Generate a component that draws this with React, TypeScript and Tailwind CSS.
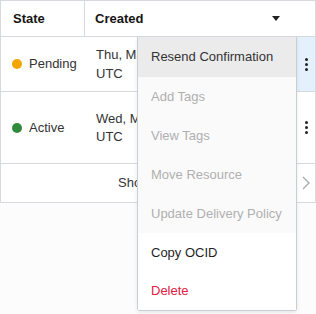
import React from "react";

const font = { fontFamily: '"Liberation Sans", Arial, sans-serif' };

function Kebab() {
  return (
    <div className="flex flex-col items-center gap-[2px]">
      <span className="block w-[3px] h-[3px] rounded-full bg-[#222]"></span>
      <span className="block w-[3px] h-[3px] rounded-full bg-[#222]"></span>
      <span className="block w-[3px] h-[3px] rounded-full bg-[#222]"></span>
    </div>
  );
}

const menuItems = [
  { label: "Resend Confirmation", kind: "active" },
  { label: "Add Tags", kind: "disabled" },
  { label: "View Tags", kind: "disabled" },
  { label: "Move Resource", kind: "disabled" },
  { label: "Update Delivery Policy", kind: "disabled" },
  { label: "Copy OCID", kind: "normal" },
  { label: "Delete", kind: "danger" },
];

export default function App() {
  return (
    <div
      className="relative w-[316px] h-[314px] overflow-hidden bg-[#fcfcfc] text-[13px] text-[#333]"
      style={font}
    >
      {/* Table */}
      <div className="w-[316px] bg-white border-t border-l border-r border-b border-[#d6dadf]">
        {/* Header */}
        <div className="flex h-[36px] border-b border-[#d6dadf] font-bold text-[#161513]">
          <div className="w-[84px] flex items-center pl-[12px] border-r border-[#d6dadf]">State</div>
          <div className="flex-1 flex items-center pl-[10px] pr-[35px] justify-between">
            <span>Created</span>
            <span className="block w-0 h-0 border-l-[4px] border-r-[4px] border-t-[5px] border-l-transparent border-r-transparent border-t-[#222]"></span>
          </div>
        </div>

        {/* Row 1 */}
        <div className="flex h-[55px] border-b border-[#d6dadf]">
          <div className="w-[85px] flex items-center pl-[11px] gap-[7px]">
            <span className="block w-[10px] h-[10px] rounded-full bg-[#f2a500]"></span>
            <span>Pending</span>
          </div>
          <div className="flex-1 flex items-center pl-[10px] leading-[19px] whitespace-nowrap overflow-hidden">
            <div>
              Thu, Mar 21, 2024, 09:15:32
              <br />
              UTC
            </div>
          </div>
          <div className="w-[19px] flex items-center justify-center border-l border-[#d6dadf] bg-[#e4f0fb]">
            <Kebab />
          </div>
        </div>

        {/* Row 2 */}
        <div className="flex h-[72px] border-b border-[#d6dadf]">
          <div className="w-[85px] flex items-center pl-[11px] gap-[7px]">
            <span className="block w-[10px] h-[10px] rounded-full bg-[#2f8a3b]"></span>
            <span>Active</span>
          </div>
          <div className="flex-1 flex items-center pl-[10px] leading-[18px] whitespace-nowrap overflow-hidden">
            <div>
              Wed, Mar 13, 2024, 14:02:10
              <br />
              UTC
            </div>
          </div>
          <div className="w-[19px] flex items-center justify-center border-l border-[#d6dadf]">
            <Kebab />
          </div>
        </div>

        {/* Footer */}
        <div className="flex h-[38px]">
          <div className="flex-1 flex items-center pl-[117px] whitespace-nowrap overflow-hidden">
            Showing 2 items
          </div>
          <div className="w-[19px] flex items-center justify-center border-l border-[#d6dadf]">
            <svg width="10" height="16" viewBox="0 0 10 16" fill="none">
              <path d="M2 2l6 6-6 6" stroke="#a9adb2" strokeWidth="1.4" />
            </svg>
          </div>
        </div>
      </div>

      {/* Action menu */}
      <div className="absolute left-[137px] top-[37px] w-[160px] bg-[#fcfcfc] border border-t-0 border-[#c9ced3] rounded-b-[3px] shadow-[0_2px_4px_rgba(0,0,0,0.08)]">
        {menuItems.map((item) => (
          <div
            key={item.label}
            className={
              item.kind === "active"
                ? "h-[40px] flex items-center pl-[13px] bg-[#ebebeb] text-[#333]"
                : item.kind === "disabled"
                ? "h-[39px] flex items-center pl-[13px] bg-[#fafafa] text-[#b0b0b0]"
                : item.kind === "danger"
                ? "h-[38px] flex items-center pl-[13px] bg-white text-[#e3203f]"
                : "h-[39px] flex items-center pl-[13px] bg-white text-[#1f1f1f]"
            }
          >
            {item.label}
          </div>
        ))}
      </div>
    </div>
  );
}
